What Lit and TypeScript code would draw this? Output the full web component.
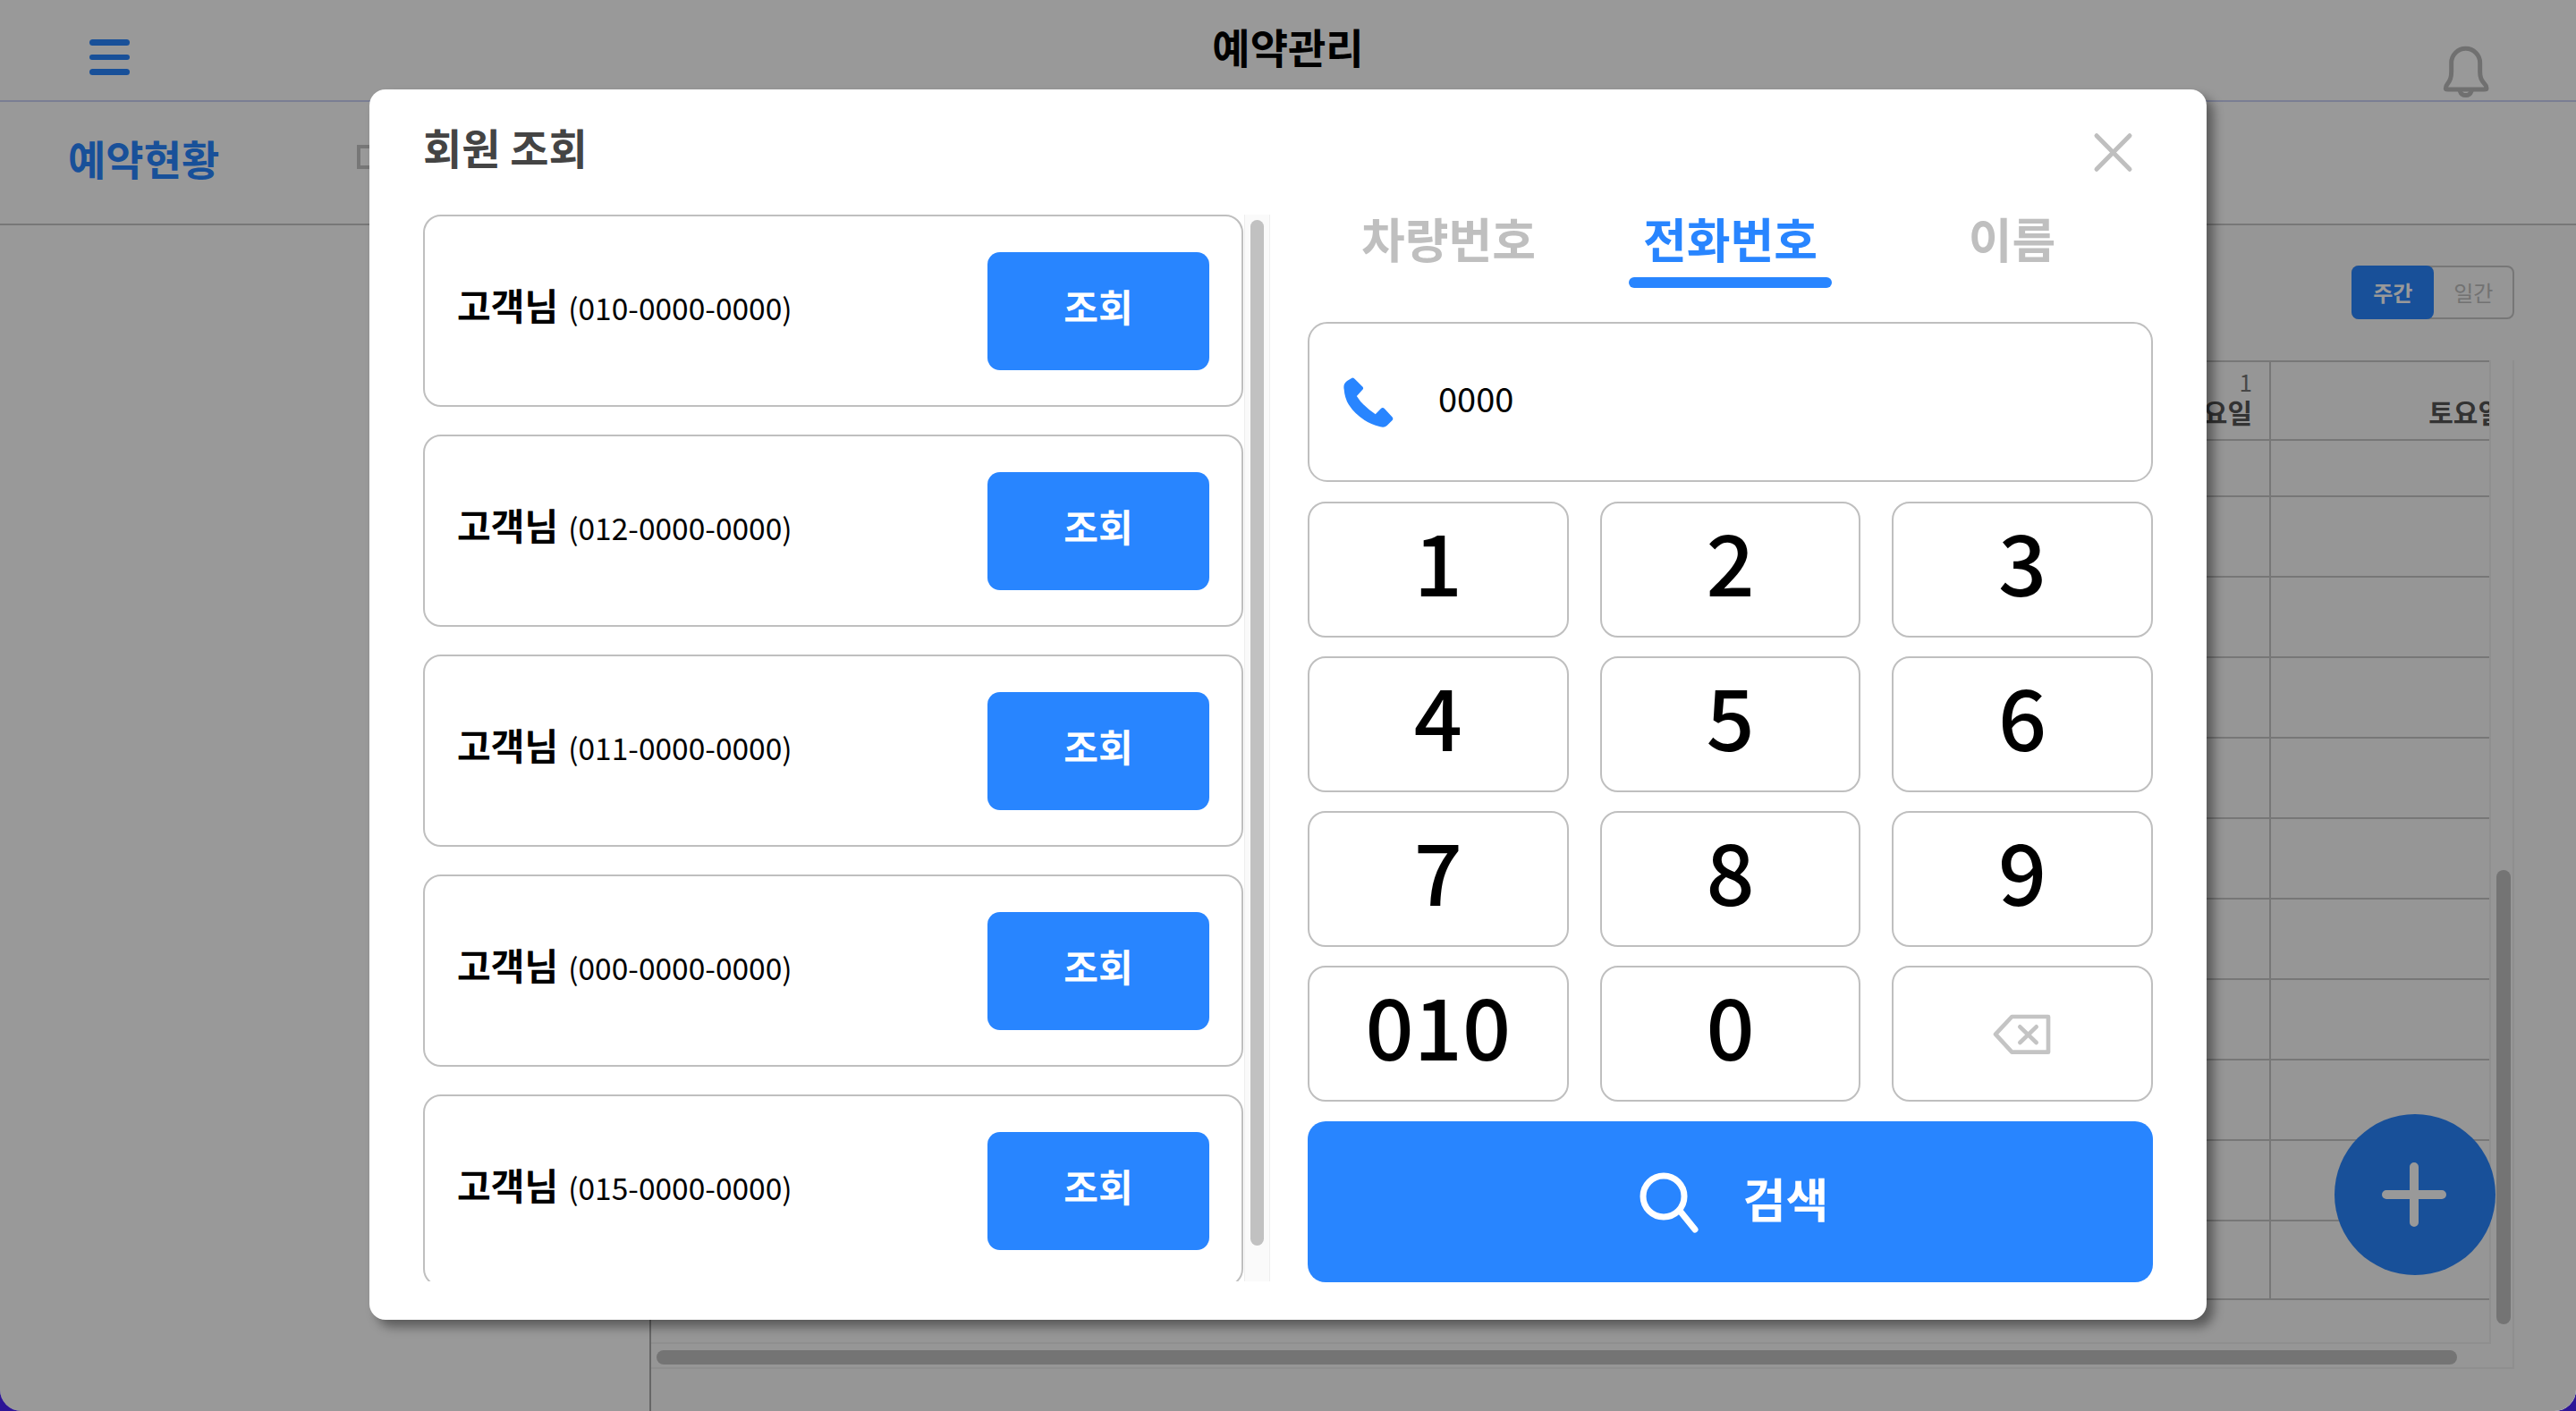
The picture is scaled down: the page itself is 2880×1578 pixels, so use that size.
import { LitElement, html, css, svg } from "lit";
import { customElement, state } from "lit/decorators.js";

const CUSTOMERS = ["010-0000-0000", "012-0000-0000", "011-0000-0000", "000-0000-0000", "015-0000-0000"];
const KEYS = ["1", "2", "3", "4", "5", "6", "7", "8", "9", "010", "0"];
const TABS = ["차량번호", "전화번호", "이름"];
const ROWS = ["short", "", "", "", "", "", "", "", "", "", "last"];

const phoneIcon = svg`<path d="M190 640 Q186 622 200 612 L216 602 Q222 600 226 606 L252 632 Q256 638 250 642 L232 662 Q252 695 294 722 L312 704 Q318 698 324 704 L350 732 Q354 738 350 742 L332 760 Q324 768 310 764 Q240 745 205 690 Q192 668 190 640 Z" fill="#2885ff"/>`;

@customElement("app-root")
export class AppRoot extends LitElement {
  @state() tab = 1;

  static styles = css`
    :host {
      display: block;
      width: 2880px;
      height: 1578px;
      background: #2d1596;
      font-family: "Noto Sans CJK KR", "Noto Sans", sans-serif;
      color: #000;
    }
    * { box-sizing: border-box; }
    .page {
      position: relative;
      width: 2880px;
      height: 1578px;
      background: #fff;
      border-radius: 0 0 24px 24px;
      overflow: hidden;
      display: flex;
      flex-direction: column;
    }
    .top {
      height: 114px;
      flex: none;
      border-bottom: 2px solid #ccd2f5;
      display: grid;
      grid-template-columns: 1fr auto 1fr;
      align-items: start;
    }
    .burger {
      margin: 44px 0 0 100px;
      width: 45px;
      display: flex;
      flex-direction: column;
      gap: 10px;
    }
    .burger i { display: block; height: 6.5px; border-radius: 4px; background: #2885ff; }
    .top-title { margin-top: 28px; font-size: 46px; line-height: 46px; font-weight: 700; }
    .bell { justify-self: end; margin: 32px 60px 0 0; display: block; overflow: visible; }
    .bar {
      height: 138px;
      flex: none;
      border-bottom: 2px solid #c6c6c6;
      display: flex;
      align-items: center;
      padding-bottom: 13px;
    }
    .bar-title {
      width: 399px;
      padding-left: 76px;
      font-size: 46px;
      line-height: 46px;
      font-weight: 700;
      color: #2885ff;
    }
    .bar-box { width: 30px; height: 27px; border: 4px solid #c6c6c6; }
    .body { flex: 1; display: flex; min-height: 0; }
    .side { width: 728px; flex: none; border-right: 2px solid #aaa; }
    .main { flex: 1; background: #fafafa; min-width: 0; padding-top: 45px; }
    .toggle {
      width: 182px;
      height: 60px;
      margin-left: 1901px;
      border: 2px solid #c6c6c6;
      border-radius: 8px;
      display: flex;
      font-size: 24px;
      line-height: 1;
      color: #bfbfbf;
    }
    .toggle span { display: flex; align-items: center; justify-content: center; width: 88px; }
    .toggle .on {
      width: 93px;
      margin: -2px 0 -2px -2px;
      background: #2885ff;
      color: #fff;
      border-radius: 8px;
      font-weight: 700;
    }
    .frame {
      margin-top: 46px;
      width: 2083px;
      height: 1128px;
      border-right: 2px solid #eee;
      border-bottom: 2px solid #eee;
      display: grid;
      grid-template-columns: 2057px 24px;
      grid-template-rows: 1100px 26px;
    }
    .scroll {
      grid-column: 1;
      grid-row: 1;
      overflow: hidden;
      border-right: 2px solid #eee;
      border-bottom: 2px solid #eee;
      min-width: 0;
    }
    .row { display: flex; height: 90px; border-bottom: 2px solid #c6c6c6; width: 2100px; }
    .row.head { height: 90px; border-top: 2px solid #c6c6c6; }
    .row.short { height: 63px; }
    .row.last { height: 88px; }
    .cell-a { flex: 0 0 1811px; border-right: 2px solid #c6c6c6; }
    .cell-b { flex: 0 0 278px; }
    .hd {
      text-align: right;
      padding: 6px 19px 0 0;
      color: #555;
    }
    .hd small { display: block; font-size: 26px; line-height: 32px; color: #777; font-weight: 400; }
    .hd b { display: block; font-size: 30px; line-height: 34px; font-weight: 700; }
    .vtrack { grid-column: 2; grid-row: 1 / 3; padding: 570px 0 0 6px; }
    .vtrack i { display: block; width: 16px; height: 508px; border-radius: 8px; background: #c1c1c1; }
    .htrack { grid-column: 1; grid-row: 2; padding: 7px 0 0 6px; }
    .htrack i { display: block; width: 2013px; height: 16px; border-radius: 8px; background: #c1c1c1; }
    .fab {
      position: absolute;
      left: 2610px;
      top: 1246px;
      width: 180px;
      height: 180px;
      border-radius: 50%;
      background: #2885ff;
      display: flex;
      align-items: center;
      justify-content: center;
      padding-right: 3px;
    }
    .overlay {
      position: absolute;
      inset: 0;
      background: rgba(0, 0, 0, 0.4);
      display: flex;
      align-items: center;
      justify-content: center;
    }
    .modal {
      width: 2054px;
      height: 1376px;
      margin-bottom: 2px;
      background: #fff;
      border-radius: 18px;
      box-shadow: 8px 8px 12px rgba(0, 0, 0, 0.4);
      padding: 0 60px 43px;
      display: flex;
      flex-direction: column;
    }
    .m-head {
      height: 140px;
      flex: none;
      display: flex;
      justify-content: space-between;
      align-items: flex-start;
    }
    .m-title {
      margin-top: 39px;
      font-size: 47px;
      line-height: 50px;
      font-weight: 700;
      color: #444;
    }
    .close { margin: 30px -3px 0 0; display: block; }
    .m-body {
      flex: 1;
      min-height: 0;
      display: grid;
      grid-template-columns: 947px 945px;
      column-gap: 42px;
    }
    .list { display: flex; min-height: 0; overflow: hidden; }
    .cards { width: 917px; flex: none; display: flex; flex-direction: column; gap: 31px; overflow: hidden; }
    .card {
      flex: 0 0 215px;
      border: 2px solid #bfbfbf;
      border-radius: 20px;
      display: flex;
      align-items: center;
      justify-content: space-between;
      padding: 0 36px;
    }
    .who { display: flex; align-items: baseline; gap: 11px; margin-bottom: 12px; }
    .who b { font-size: 41px; line-height: 48px; font-weight: 700; }
    .who span { font-size: 33.5px; line-height: 48px; }
    .look {
      width: 248px;
      height: 132px;
      border-radius: 14px;
      background: #2885ff;
      color: #fff;
      font-size: 42px;
      line-height: 1;
      font-weight: 700;
      display: flex;
      align-items: center;
      justify-content: center;
      padding-bottom: 12px;
    }
    .track {
      flex: 1;
      margin-left: 1px;
      background: #fafafa;
      border-left: 1px solid #eee;
      border-right: 1px solid #eee;
      padding: 6px 6px 0 6px;
    }
    .track i { display: block; height: 1147px; border-radius: 8px; background: #c1c1c1; }
    .pane { display: flex; flex-direction: column; min-height: 0; }
    .tabs { display: grid; grid-template-columns: repeat(3, 1fr); height: 82px; flex: none; }
    .tab {
      display: flex;
      flex-direction: column;
      align-items: center;
      font-size: 53px;
      line-height: 52px;
      font-weight: 700;
      color: #bfbfbf;
    }
    .tab.on { color: #2885ff; }
    .tab.on::after {
      content: "";
      width: 227px;
      height: 12px;
      margin-top: 18px;
      border-radius: 6px;
      background: #2885ff;
    }
    .field {
      margin-top: 38px;
      height: 179px;
      flex: none;
      border: 2px solid #bfbfbf;
      border-radius: 22px;
      display: flex;
      align-items: center;
      padding: 0 0 0 38px;
      gap: 50px;
      font-size: 38px;
      line-height: 1;
    }
    .field svg { display: block; }
    .field span { margin-bottom: 10px; }
    .keys {
      margin-top: 22px;
      display: grid;
      grid-template-columns: repeat(3, 1fr);
      grid-auto-rows: 152px;
      column-gap: 35px;
      row-gap: 21px;
      flex: none;
    }
    .key {
      border: 2px solid #bfbfbf;
      border-radius: 20px;
      display: flex;
      align-items: center;
      justify-content: center;
      font-size: 95px;
      line-height: 1;
      font-weight: 500;
      padding-bottom: 24px;
    }
    .key.icon { padding-bottom: 0; }
    .key svg { display: block; }
    .go {
      margin-top: 22px;
      height: 180px;
      flex: none;
      border-radius: 20px;
      background: #2885ff;
      color: #fff;
      display: flex;
      align-items: center;
      justify-content: center;
      gap: 48px;
      padding-left: 6px;
      font-size: 52px;
      line-height: 1;
      font-weight: 700;
    }
    .go svg { display: block; }
    .go span { margin-bottom: 8px; }
  `;

  render() {
    return html`
      <div class="page">
        <div class="top">
          <div class="burger"><i></i><i></i><i></i></div>
          <div class="top-title">예약관리</div>
          <svg class="bell" width="120" height="83" viewBox="0 0 360 249" fill="none" stroke="#bbb" stroke-width="15" stroke-linejoin="round" stroke-linecap="round">
            <path d="M103 200 Q103 192 110 184 Q122 170 122 145 V115 A48 48 0 0 1 218 115 V145 Q218 170 232 184 Q240 192 240 200 Q240 204 232 204 H110 Q103 204 103 200 Z" />
            <path d="M151 210 A20 20 0 0 0 189 210" />
          </svg>
        </div>
        <div class="bar">
          <div class="bar-title">예약현황</div>
          <div class="bar-box"></div>
        </div>
        <div class="body">
          <div class="side"></div>
          <div class="main">
            <div class="toggle"><span class="on">주간</span><span>일간</span></div>
            <div class="frame">
              <div class="scroll">
                <div class="row head">
                  <div class="cell-a hd"><small>1</small><b>금요일</b></div>
                  <div class="cell-b hd"><small>2</small><b>토요일</b></div>
                </div>
                ${ROWS.map(
                  (r) => html`<div class="row ${r}"><div class="cell-a"></div><div class="cell-b"></div></div>`
                )}
              </div>
              <div class="vtrack"><i></i></div>
              <div class="htrack"><i></i></div>
            </div>
          </div>
        </div>
        <div class="fab">
          <svg width="72" height="72" viewBox="0 0 72 72" stroke="#fff" stroke-width="10" stroke-linecap="round">
            <path d="M5 36 H67 M36 5 V67" />
          </svg>
        </div>
        <div class="overlay">
          <div class="modal">
            <div class="m-head">
              <div class="m-title">회원 조회</div>
              <svg class="close" width="90" height="80" viewBox="0 0 270 240" stroke="#bfbfbf" stroke-width="15" stroke-linecap="round">
                <path d="M72 65 L183 178 M183 65 L72 178" />
              </svg>
            </div>
            <div class="m-body">
              <div class="list">
                <div class="cards">
                  ${CUSTOMERS.map(
                    (c) => html`<div class="card">
                      <div class="who"><b>고객님</b><span>(${c})</span></div>
                      <div class="look">조회</div>
                    </div>`
                  )}
                </div>
                <div class="track"><i></i></div>
              </div>
              <div class="pane">
                <div class="tabs">
                  ${TABS.map((t, i) => html`<div class="tab ${i === this.tab ? "on" : ""}">${t}</div>`)}
                </div>
                <div class="field">
                  <svg width="56" height="56" viewBox="188 600 166 166">${phoneIcon}</svg>
                  <span>0000</span>
                </div>
                <div class="keys">
                  ${KEYS.map((k) => html`<div class="key">${k}</div>`)}
                  <div class="key icon">
                    <svg width="120" height="90" viewBox="0 0 360 270" fill="none" stroke="#c4c4c4" stroke-width="14" stroke-linejoin="round" stroke-linecap="round">
                      <path d="M145 78 H267 V197 H145 L90 137 Z" />
                      <path d="M172 112 L227 165 M227 112 L172 165" />
                    </svg>
                  </div>
                </div>
                <div class="go">
                  <svg width="70" height="70" viewBox="0 0 70 70" fill="none" stroke="#fff" stroke-width="7" stroke-linecap="round">
                    <circle cx="29" cy="29" r="23" />
                    <path d="M47 45 L64 66" />
                  </svg>
                  <span>검색</span>
                </div>
              </div>
            </div>
          </div>
        </div>
      </div>
    `;
  }
}
